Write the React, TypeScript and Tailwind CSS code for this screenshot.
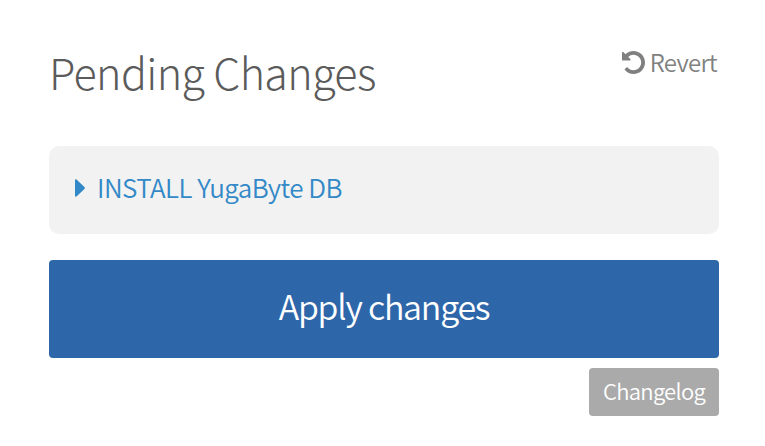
import React from "react";

function UndoIcon({ className }: { className?: string }) {
  return (
    <svg className={className} viewBox="0 0 1536 1536" fill="currentColor" aria-hidden="true">
      <path d="M1536 768q0 156-61 298t-164 245-245 164-298 61q-172 0-327-72.5T177 1259q-7-10-6.5-22.5t8.5-20.5l137-138q10-9 25-9 16 2 23 12 73 95 179 147t225 52q104 0 198.5-40.5T1130 1130t109.5-163.5T1280 768t-40.5-198.5T1130 406 966.5 296.5 768 256q-98 0-188 35.5T420 393l137 138q31 30 14 69-17 40-59 40H64q-26 0-45-19T0 576V128q0-42 40-59 39-17 69 14l130 129q107-101 244.5-156.5T768 0q156 0 298 61t245 164 164 245 61 298z" />
    </svg>
  );
}

export default function App() {
  return (
    <main className="h-[446px] w-[765px] overflow-hidden bg-white pl-[49px] pr-[46px] pt-[41px] font-['Noto_Sans_CJK_SC',sans-serif] font-light">
      <header className="flex h-[105px] items-start justify-between">
        <h1 className="whitespace-nowrap text-[43px] leading-[60px] tracking-[-0.6px] text-[#5b5b5b]">Pending Changes</h1>
        <button className="mt-[6px] flex items-center whitespace-nowrap pr-[2px] text-[24px] leading-[30px] text-[#808080]">
          <UndoIcon className="mr-[5px] size-[23px]" />
          <span className="font-[350] tracking-[-0.7px]">Revert</span>
        </button>
      </header>
      <section className="flex h-[88px] items-center rounded-[10px] bg-[#f2f2f2] pl-[26px] text-[#3389c7]">
        <svg className="-mt-[5px] mr-[12px] h-[18px] w-[10px]" viewBox="0 0 10 18" fill="currentColor">
          <path d="M0 1.2C0 .1 1 .1 1.8.7L9.4 8.1c.7.6.7 1.2 0 1.8L1.8 17.3C1 17.9 0 17.9 0 16.8Z" />
        </svg>
        <span className="-mt-[6px] whitespace-nowrap text-[26px] font-[350] leading-[36px] tracking-[-0.55px]">INSTALL YugaByte DB</span>
      </section>
      <button className="mt-[26px] flex h-[98px] w-full items-center justify-center rounded-[4px] bg-[#2e66aa] text-white">
        <span className="-mt-[6px] whitespace-nowrap text-[34px] font-[350] leading-[48px] tracking-[-1.25px]">Apply changes</span>
      </button>
      <div className="mt-[10px] flex justify-end">
        <button className="flex h-[48px] w-[130px] items-center justify-center rounded-[4px] bg-[#aaaaaa] text-white">
          <span className="-mt-[4px] whitespace-nowrap text-[22px] font-[350] leading-[32px] tracking-[-0.72px]">Changelog</span>
        </button>
      </div>
    </main>
  );
}
